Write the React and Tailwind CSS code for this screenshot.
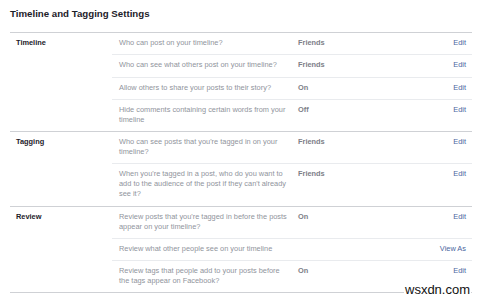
import React from "react";

const sections = [
  {
    label: "Timeline",
    rows: [
      { text: ["Who can post on your timeline?"], value: "Friends", action: "Edit" },
      { text: ["Who can see what others post on your timeline?"], value: "Friends", action: "Edit" },
      { text: ["Allow others to share your posts to their story?"], value: "On", action: "Edit" },
      { text: ["Hide comments containing certain words from your", "timeline"], value: "Off", action: "Edit" },
    ],
  },
  {
    label: "Tagging",
    rows: [
      { text: ["Who can see posts that you're tagged in on your", "timeline?"], value: "Friends", action: "Edit" },
      {
        text: [
          "When you're tagged in a post, who do you want to",
          "add to the audience of the post if they can't already",
          "see it?",
        ],
        value: "Friends",
        action: "Edit",
      },
    ],
  },
  {
    label: "Review",
    rows: [
      { text: ["Review posts that you're tagged in before the posts", "appear on your timeline?"], value: "On", action: "Edit" },
      { text: ["Review what other people see on your timeline"], value: "", action: "View As" },
      { text: ["Review tags that people add to your posts before", "the tags appear on Facebook?"], value: "On", action: "Edit" },
    ],
  },
];

export default function App() {
  return (
    <div
      className="relative w-[480px] h-[300px] bg-white overflow-hidden"
      style={{ fontFamily: '"Liberation Sans", Arial, sans-serif' }}
    >
      <div className="pl-[10px] pt-[8px]">
        <div className="text-[9.7px] leading-[12px] font-bold text-[#1d2129] mb-[12px]">
          Timeline and Tagging Settings
        </div>
        <div className="w-[462px] border-b border-[#cfd1d5]">
          {sections.map((s) => (
            <div key={s.label} className="flex border-t border-[#cfd1d5]">
              <div className="w-[102px] pl-[6px] pt-[5px] text-[7.4px] leading-[10px] font-bold text-[#1d2129]">
                {s.label}
              </div>
              <div className="flex-1">
                {s.rows.map((r, i) => (
                  <div
                    key={i}
                    className={
                      "flex pt-[5px] pb-[6.25px] text-[7.4px] leading-[10px] " +
                      (i > 0 ? "border-t border-[#e9ebee]" : "")
                    }
                  >
                    <div className="w-[186px] pl-[7px] text-[#90949c] whitespace-nowrap">
                      {r.text.map((t, j) => (
                        <div key={j}>{t}</div>
                      ))}
                    </div>
                    <div className="w-[80px] font-bold text-[#7d8087]">{r.value}</div>
                    <div className="flex-1 text-right pr-[6px] text-[#4a66a0]">{r.action}</div>
                  </div>
                ))}
              </div>
            </div>
          ))}
        </div>
      </div>
      <div className="absolute left-[404px] top-[283px] bg-white px-[1px] text-[13px] leading-[14px] text-[#111]">
        wsxdn.com
      </div>
    </div>
  );
}
